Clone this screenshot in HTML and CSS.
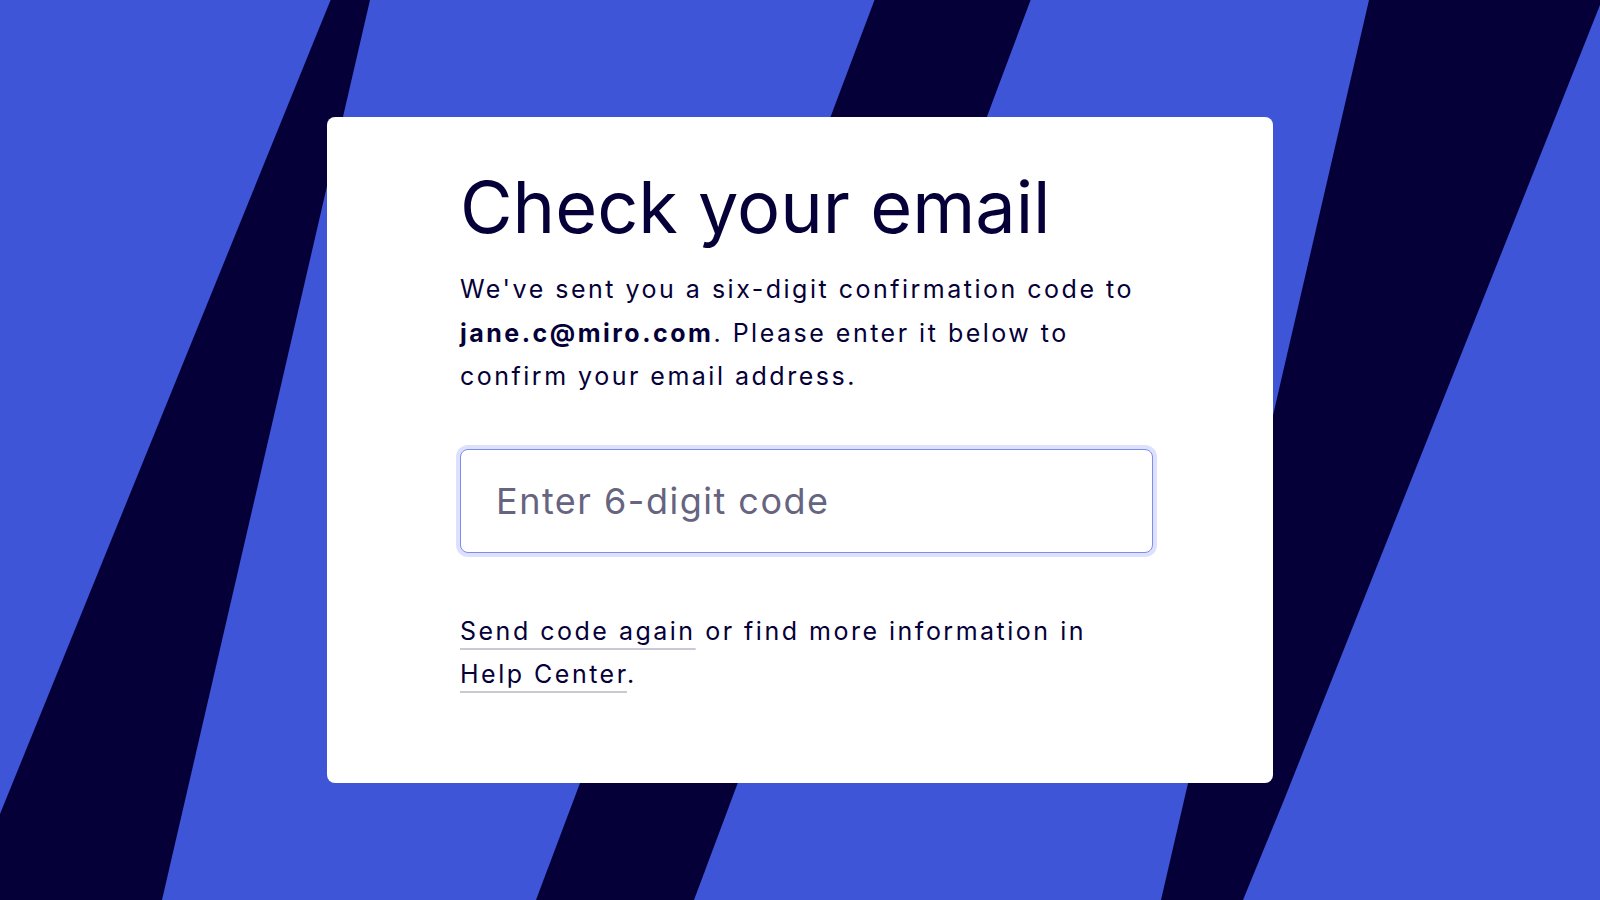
FILE: index.html
```html
<!DOCTYPE html>
<html lang="en">
<head>
<meta charset="utf-8">
<title>Check your email</title>
<link rel="stylesheet" href="styles.css">
</head>
<body>
<div class="page">
  <svg class="bg" viewBox="0 0 1600 900" preserveAspectRatio="none" aria-hidden="true">
    <rect width="1600" height="900" fill="#3F55D8"/>
    <polygon fill="#050038" points="330.6,0 370,0 162,900 0,900 0,814"/>
    <polygon fill="#050038" points="874.5,0 1030.6,0 694,900 536,900"/>
    <polygon fill="#050038" points="1369,0 1602,0 1284,800 1243,900 1161,900"/>
  </svg>
  <main class="card">
    <div class="content">
      <h1 class="title">Check your email</h1>
      <p class="lead">We've sent you a six-digit confirmation code to <strong class="email">jane.c@miro.com</strong>. Please enter it below to confirm your email address.</p>
      <input class="code-input" type="text" placeholder="Enter 6-digit code" aria-label="Enter 6-digit code">
      <p class="help"><a class="link" href="#">Send code again</a> or find more information in <a class="link" href="#">Help Center</a>.</p>
    </div>
  </main>
</div>
</body>
</html>
```
FILE: styles.css
```css
* { box-sizing: border-box; }

html, body {
  margin: 0;
  padding: 0;
  height: 100%;
}

body {
  font-family: Inter, "Noto Sans", sans-serif;
  color: #050038;
  background: #3F55D8;
  overflow: hidden;
}

.page {
  position: relative;
  min-height: 100vh;
  display: flex;
  align-items: center;
  justify-content: center;
}

.bg {
  position: absolute;
  inset: 0;
  width: 100%;
  height: 100%;
  display: block;
}

.card {
  position: relative;
  width: 946px;
  background: #ffffff;
  border-radius: 8px;
  padding: 50px 120px 86px 133px;
}

.content {
  display: flex;
  flex-direction: column;
  align-items: stretch;
}

.title {
  margin: 0;
  font-size: 72px;
  line-height: 80px;
  font-weight: 400;
  letter-spacing: 0;
  color: #050038;
}

.lead,
.help {
  margin: 0;
  font-size: 25px;
  line-height: 43.2px;
  letter-spacing: 2.5px;
  font-weight: 400;
  color: #050038;
}

.lead {
  margin-top: 21px;
}

.email {
  font-weight: 700;
}

.code-input {
  margin-top: 51px;
  width: 100%;
  height: 104px;
  border: 1.5px solid #7d8cf0;
  border-radius: 8px;
  box-shadow: 0 0 0 4px #dde1fb;
  padding: 0 20px 0 35px;
  font-family: Inter, "Noto Sans", sans-serif;
  font-size: 36px;
  letter-spacing: 1.5px;
  color: #050038;
  background: #ffffff;
  outline: none;
}

.code-input::placeholder {
  color: #66647f;
  opacity: 1;
}

.help {
  margin-top: 57px;
}

.link {
  color: #050038;
  text-decoration: underline;
  text-decoration-color: #c9c8d4;
  text-decoration-thickness: 1.5px;
  text-underline-offset: 8px;
}
```
